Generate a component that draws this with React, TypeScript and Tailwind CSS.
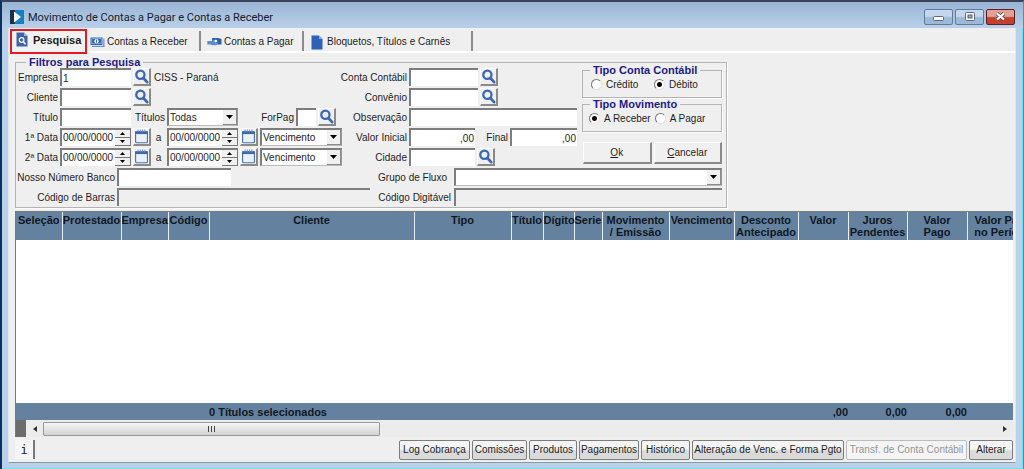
import type { ReactNode } from 'react'
import clsx from 'clsx'

const BEVEL_IN = 'border-t-2 border-l-2 border-[#7d7d7d]'
const FIELD = `h-[18px] min-w-0 bg-white px-px text-[10px] leading-4 text-[#222] outline-none disabled:bg-[#efefef] ${BEVEL_IN}`
const BEVEL_OUT =
  'border-t border-l border-r-2 border-b-2 border-t-white border-l-white border-r-[#8a8a8a] border-b-[#8a8a8a] bg-[#f0f0f0]'

interface Column {
  title: string
  width: number
}

const COLUMNS: Column[] = [
  { title: 'Seleção', width: 46 },
  { title: 'Protestado', width: 59 },
  { title: 'Empresa', width: 47 },
  { title: 'Código', width: 41 },
  { title: 'Cliente', width: 205 },
  { title: 'Tipo', width: 97 },
  { title: 'Título', width: 32 },
  { title: 'Dígito', width: 31 },
  { title: 'Serie', width: 28 },
  { title: 'Movimento\n/ Emissão', width: 67 },
  { title: 'Vencimento', width: 65 },
  { title: 'Desconto\nAntecipado', width: 64 },
  { title: 'Valor', width: 50 },
  { title: 'Juros\nPendentes', width: 59 },
  { title: 'Valor\nPago', width: 60 },
  { title: 'Valor Pago\nno Período', width: 72 },
]

const ACTIONS = [
  { label: 'Log Cobrança', width: 'w-[71px]' },
  { label: 'Comissões', width: 'w-[55px]' },
  { label: 'Produtos', width: 'w-[48px]' },
  { label: 'Pagamentos', width: 'w-[60px]' },
  { label: 'Histórico', width: 'w-[49px]' },
  { label: 'Alteração de Venc. e Forma Pgto', width: 'w-[152px]' },
  { label: 'Transf. de Conta Contábil', width: 'w-[121px]', disabled: true },
  { label: 'Alterar', width: 'w-[44px]' },
]

function SearchIcon() {
  return (
    <svg viewBox="0 0 16 16" className="size-[15px]" fill="none" stroke="#3b68b0">
      <circle cx="6.8" cy="6.2" r="4.4" strokeWidth="2.4" />
      <path d="M10 9.6L14 14" strokeWidth="2.9" strokeLinecap="round" />
    </svg>
  )
}

function CalendarIcon() {
  return (
    <svg viewBox="0 0 16 16" className="size-[15px]">
      <rect x="1.7" y="3" width="12.6" height="11.6" rx="1" fill="#e9f1fb" stroke="#4d72ae" strokeWidth="1.2" />
      <rect x="1.2" y="2.4" width="13.6" height="3" fill="#3f66a8" />
      <path d="M4.4 0.5v3M6.8 0.5v3M9.2 0.5v3M11.6 0.5v3" stroke="#6d8fc6" strokeWidth="1" />
    </svg>
  )
}

function PageSearchIcon() {
  return (
    <svg viewBox="0 0 12 15" className="h-[15px] w-3">
      <path d="M0.5 0.5h7.5l3.5 3.5v10.5h-11z" fill="#3d64a8" />
      <path d="M8 0.5v3.5h3.5z" fill="#9fb7dc" />
      <circle cx="5.6" cy="8" r="2.3" fill="none" stroke="#fff" strokeWidth="1.2" />
      <path d="M7.3 9.8l2.2 2.4" stroke="#fff" strokeWidth="1.4" />
    </svg>
  )
}

function PageIcon() {
  return (
    <svg viewBox="0 0 12 15" className="h-[15px] w-3">
      <path d="M0.5 0.5h7.5l3.5 3.5v10.5h-11z" fill="#2f62b4" />
      <path d="M8 0.5v3.5h3.5z" fill="#8fadd9" />
    </svg>
  )
}

function MoneyIcon() {
  return (
    <svg viewBox="0 0 15 10" className="h-[10px] w-[15px]">
      <rect x="0.5" y="0.5" width="12" height="7.5" fill="#3468b4" />
      <rect x="1.8" y="1.7" width="9.4" height="5" fill="none" stroke="#a9c4ea" strokeWidth="0.6" />
      <circle cx="6.5" cy="4.2" r="2.1" fill="#fff" />
      <path d="M6.5 2.7v3" stroke="#3468b4" strokeWidth="1" />
      <path d="M13.9 1.5v8M2 9.3h12.4" stroke="#4d7cc0" strokeWidth="1" />
    </svg>
  )
}

function PayIcon() {
  return (
    <svg viewBox="0 0 15 10" className="h-[10px] w-[15px]">
      <path d="M5 1h6l3.5 1v5.5h-9z" fill="#2c5fae" />
      <path d="M0.3 4h4.5l2-1.2h3.2l0.6 1.4-2.2 0.8 3 0.5-2 2.8H5l-1.4-0.8H0.3z" fill="#5f8fcb" />
      <circle cx="8.8" cy="4" r="1.3" fill="#fff" />
    </svg>
  )
}

function IconButton({ label, children }: { label: string; children: ReactNode }) {
  return (
    <button
      type="button"
      aria-label={label}
      className={clsx('flex h-[18px] w-[18px] shrink-0 items-center justify-center', BEVEL_OUT)}
    >
      {children}
    </button>
  )
}

function FieldLabel({ id, width, children }: { id: string; width: string; children: ReactNode }) {
  return (
    <label htmlFor={id} className={clsx('flex shrink-0 justify-end pt-[2px] pr-[2px] whitespace-nowrap', width)}>
      {children}
    </label>
  )
}

function SelectBox({ id, label, options, width }: { id: string; label?: string; options: string[]; width: string }) {
  return (
    <div className={clsx('relative shrink-0', width)}>
      <select
        id={id}
        aria-label={label}
        className={clsx('block w-full appearance-none border-r border-b border-r-[#999] border-b-[#bbb]', FIELD)}
      >
        {options.map((o) => (
          <option key={o}>{o}</option>
        ))}
      </select>
      <span className="pointer-events-none absolute top-[2px] right-px flex h-[15px] w-[14px] items-center justify-center border-r border-b border-[#8a8a8a] bg-[#f0f0f0]">
        <svg viewBox="0 0 7 4" className="h-1 w-[7px]">
          <path d="M0 0h7L3.5 4z" fill="#000" />
        </svg>
      </span>
    </div>
  )
}

function DateField({ id, label }: { id: string; label: string }) {
  return (
    <div className="flex w-[90px] shrink-0 gap-[2px]">
      <div className={clsx('flex h-[18px] w-[71px] shrink-0 bg-white', BEVEL_IN)}>
        <input
          id={id}
          aria-label={label}
          defaultValue="00/00/0000"
          className="w-[53px] bg-transparent pl-px text-[10px] leading-4 outline-none"
        />
        <div className="flex w-4 flex-col">
          <button type="button" aria-label="Aumentar" className="flex h-2 items-center justify-center border-r border-b border-[#777] bg-[#f0f0f0]">
            <svg viewBox="0 0 5 3" className="h-[3px] w-[5px]">
              <path d="M0 3h5L2.5 0z" fill="#000" />
            </svg>
          </button>
          <button type="button" aria-label="Diminuir" className="flex h-2 items-center justify-center border-r border-b border-[#777] bg-[#f0f0f0]">
            <svg viewBox="0 0 5 3" className="h-[3px] w-[5px]">
              <path d="M0 0h5L2.5 3z" fill="#000" />
            </svg>
          </button>
        </div>
      </div>
      <IconButton label="Calendário">
        <CalendarIcon />
      </IconButton>
    </div>
  )
}

function DateRow({ id, label }: { id: string; label: string }) {
  return (
    <div className="flex h-[18px] items-center">
      <FieldLabel id={`${id}-de`} width="w-[44px]">{label}</FieldLabel>
      <DateField id={`${id}-de`} label={label} />
      <span className="w-[17px] pt-[2px] text-center">a</span>
      <DateField id={`${id}-ate`} label={`${label} final`} />
      <div className="ml-[3px]">
        <SelectBox id={`${id}-tipo`} label={`Tipo ${label}`} options={['Vencimento', 'Emissão']} width="w-[82px]" />
      </div>
    </div>
  )
}

function Radio({ name, label, checked }: { name: string; label: string; checked?: boolean }) {
  return (
    <label className="flex items-center gap-1">
      <input
        type="radio"
        name={name}
        defaultChecked={checked}
        className="size-[11px] appearance-none rounded-full border border-[#e2e2e2] border-t-[#777] border-l-[#777] bg-white checked:bg-[radial-gradient(circle,#000_2px,#fff_3px)]"
      />
      <span className="pt-[2px]">{label}</span>
    </label>
  )
}

function RadioGroup({ title, children }: { title: string; children: ReactNode }) {
  return (
    <fieldset className="h-[34px] border border-[#b4b4b4] shadow-[1px_1px_0_#fff]">
      <legend className="ml-[7px] px-[3px] text-[11px] leading-3 font-bold text-[#1c1c86]">{title}</legend>
      <div className="flex h-4 items-center pl-[6px]">{children}</div>
    </fieldset>
  )
}

function TitleBar() {
  const frame = 'flex h-4 w-[29px] items-center justify-center rounded-[2px] border'
  return (
    <header className="flex h-[26px] shrink-0 items-center bg-linear-to-b from-[#98b4d3] to-[#bad0ea] pr-2 pl-2">
      <svg viewBox="0 0 14 14" className="mt-1 size-[14px]">
        <rect width="14" height="14" fill="#17324f" />
        <rect x="5" width="9" height="14" fill="#1581c4" />
        <path d="M4 1.5L11 7l-7 5.5z" fill="#fff" />
      </svg>
      <h1 className="ml-1 flex-1 pt-[5px] font-[Roboto,'Open_Sans',sans-serif] text-[11px] leading-4 text-[#14202e]">
        Movimento de Contas a Pagar e Contas a Receber
      </h1>
      <div className="flex gap-[2px] pt-[3px]">
        <button type="button" aria-label="Minimizar" className={clsx(frame, 'border-[#5f7b9c] bg-linear-to-b from-[#c3d6ec] from-45% to-[#9db9d8] to-55%')}>
          <svg viewBox="0 0 11 5" className="mt-[3px] h-[5px] w-[11px]">
            <rect x="0.5" y="0.5" width="10" height="4" rx="1" fill="#fff" stroke="#5b6573" />
          </svg>
        </button>
        <button type="button" aria-label="Maximizar" className={clsx(frame, 'border-[#5f7b9c] bg-linear-to-b from-[#c3d6ec] from-45% to-[#9db9d8] to-55%')}>
          <svg viewBox="0 0 10 9" className="h-[9px] w-[10px]">
            <rect x="0.5" y="0.5" width="9" height="8" rx="1" fill="#fff" stroke="#5b6573" />
            <rect x="3" y="3" width="4" height="3" fill="#8fa9c8" stroke="#5b6573" />
          </svg>
        </button>
        <button type="button" aria-label="Fechar" className={clsx(frame, 'border-[#5a2026] bg-linear-to-b from-[#e3a096] from-45% to-[#c4402d] to-55%')}>
          <svg viewBox="0 0 11 9" className="h-[9px] w-[11px]">
            <path d="M2 1.5l7 6M9 1.5l-7 6" stroke="#6b4a50" strokeWidth="3.8" />
            <path d="M2 1.5l7 6M9 1.5l-7 6" stroke="#fff" strokeWidth="2.2" />
          </svg>
        </button>
      </div>
    </header>
  )
}

function Tabs() {
  const tab = 'flex h-5 items-center border-r-2 border-[#8c8c8c] pt-[2px]'
  return (
    <nav role="tablist" className="flex h-[25px] shrink-0 items-end border-b-2 border-white">
      <button
        type="button"
        role="tab"
        aria-selected="true"
        className="z-10 -mb-[3px] ml-px flex h-[25px] w-[77px] shrink-0 items-center gap-[5px] border-2 border-[#e01b24] bg-[#f2f2f2] pb-1 pl-1 text-[11px] font-bold"
      >
        <PageSearchIcon />
        Pesquisa
      </button>
      <button type="button" role="tab" className={clsx(tab, 'ml-[3px] w-[111px] gap-[2px]')}>
        <MoneyIcon />
        Contas a Receber
      </button>
      <button type="button" role="tab" className={clsx(tab, 'w-[103px] gap-[2px] pl-[6px]')}>
        <PayIcon />
        Contas a Pagar
      </button>
      <button type="button" role="tab" className={clsx(tab, 'w-[169px] gap-1 pl-[7px]')}>
        <PageIcon />
        Bloquetos, Títulos e Carnês
      </button>
    </nav>
  )
}

function Filters() {
  return (
    <fieldset className="w-[712px] border border-[#b4b4b4] pb-px shadow-[1px_1px_0_#fff]">
      <legend className="ml-[10px] px-[3px] text-[11px] leading-3 font-bold text-[#1c1c86]">Filtros para Pesquisa</legend>
      <div className="flex">
        <div className="flex w-[328px] flex-col gap-[2px]">
          <div className="flex h-[18px] items-center">
            <FieldLabel id="empresa" width="w-[44px]">Empresa</FieldLabel>
            <input id="empresa" defaultValue="1" className={clsx(FIELD, 'mr-[2px] w-[71px]')} />
            <IconButton label="Buscar empresa"><SearchIcon /></IconButton>
            <span className="pt-[2px] pl-[3px]">CISS - Paraná</span>
          </div>
          <div className="flex h-[18px] items-center">
            <FieldLabel id="cliente" width="w-[44px]">Cliente</FieldLabel>
            <input id="cliente" className={clsx(FIELD, 'mr-[2px] w-[71px]')} />
            <IconButton label="Buscar cliente"><SearchIcon /></IconButton>
          </div>
          <div className="flex h-[18px] items-center">
            <FieldLabel id="titulo" width="w-[44px]">Título</FieldLabel>
            <input id="titulo" className={clsx(FIELD, 'w-[71px]')} />
            <FieldLabel id="titulos" width="w-[36px]">Títulos</FieldLabel>
            <SelectBox id="titulos" options={['Todas', 'Abertas']} width="w-[71px]" />
            <FieldLabel id="forpag" width="w-[58px]">ForPag</FieldLabel>
            <input id="forpag" className={clsx(FIELD, 'mr-[2px] w-[20px]')} />
            <IconButton label="Buscar forma de pagamento"><SearchIcon /></IconButton>
          </div>
          <DateRow id="data1" label="1ª Data" />
          <DateRow id="data2" label="2ª Data" />
        </div>

        <div className="flex w-[233px] flex-col gap-[2px]">
          <div className="flex h-[18px] items-center">
            <FieldLabel id="conta" width="w-[65px]">Conta Contábil</FieldLabel>
            <input id="conta" className={clsx(FIELD, 'mr-[2px] w-[69px]')} />
            <IconButton label="Buscar conta"><SearchIcon /></IconButton>
          </div>
          <div className="flex h-[18px] items-center">
            <FieldLabel id="convenio" width="w-[65px]">Convênio</FieldLabel>
            <input id="convenio" className={clsx(FIELD, 'mr-[2px] w-[69px]')} />
            <IconButton label="Buscar convênio"><SearchIcon /></IconButton>
          </div>
          <div className="flex h-[18px] items-center">
            <FieldLabel id="obs" width="w-[65px]">Observação</FieldLabel>
            <input id="obs" className={clsx(FIELD, 'flex-1')} />
          </div>
          <div className="flex h-[18px] items-center">
            <FieldLabel id="vinicial" width="w-[65px]">Valor Inicial</FieldLabel>
            <input id="vinicial" defaultValue=",00" className={clsx(FIELD, 'w-[66px] text-right')} />
            <FieldLabel id="vfinal" width="w-[35px]">Final</FieldLabel>
            <input id="vfinal" defaultValue=",00" className={clsx(FIELD, 'flex-1 text-right')} />
          </div>
          <div className="flex h-[18px] items-center">
            <FieldLabel id="cidade" width="w-[65px]">Cidade</FieldLabel>
            <input id="cidade" className={clsx(FIELD, 'mr-[2px] w-[66px]')} />
            <IconButton label="Buscar cidade"><SearchIcon /></IconButton>
          </div>
        </div>

        <div className="-mt-1 ml-[5px] flex flex-1 flex-col pr-1">
          <RadioGroup title="Tipo Conta Contábil">
            <div className="w-[65px] shrink-0 pl-[2px]"><Radio name="conta-tipo" label="Crédito" /></div>
            <Radio name="conta-tipo" label="Débito" checked />
          </RadioGroup>
          <RadioGroup title="Tipo Movimento">
            <div className="flex gap-1 whitespace-nowrap">
              <Radio name="movimento" label="A Receber" checked />
              <Radio name="movimento" label="A Pagar" />
            </div>
          </RadioGroup>
          <div className="mt-[10px] ml-px grid grid-cols-2 gap-[2px]">
            <button type="button" className={clsx('h-[22px]', BEVEL_OUT)}><u>O</u>k</button>
            <button type="button" className={clsx('h-[22px]', BEVEL_OUT)}><u>C</u>ancelar</button>
          </div>
        </div>
      </div>

      <div className="mt-[2px] grid grid-cols-[101px_253px_84px_1fr] items-center gap-y-[2px] pr-1">
        <FieldLabel id="nosso" width="w-full">Nosso Número Banco</FieldLabel>
        <input id="nosso" className={clsx(FIELD, 'w-[114px]')} />
        <FieldLabel id="fluxo" width="w-[79px]">Grupo de Fluxo</FieldLabel>
        <SelectBox id="fluxo" options={['']} width="w-full" />
        <FieldLabel id="barras" width="w-full">Código de Barras</FieldLabel>
        <input id="barras" disabled className={clsx(FIELD, 'w-full')} />
        <FieldLabel id="digitavel" width="w-[83px]">Código Digitável</FieldLabel>
        <input id="digitavel" disabled className={clsx(FIELD, 'w-full')} />
      </div>
    </fieldset>
  )
}

function ResultsTable() {
  return (
    <section className="mt-[3px] flex flex-1 flex-col overflow-hidden border-t border-l border-[#7a7a7a] bg-white">
      <div className="flex-1 overflow-hidden">
        <table className="w-[1023px] table-fixed border-collapse text-[11px] leading-3 font-bold text-[#10181f]">
          <colgroup>
            {COLUMNS.map((c) => (
              <col key={c.title} style={{ width: c.width }} />
            ))}
          </colgroup>
          <thead>
            <tr className="h-[28px] bg-[#6581a0]">
              {COLUMNS.map((c) => (
                <th key={c.title} className="border-r border-[#e6edf3] p-0 pt-[2px] text-center align-top whitespace-pre">
                  {c.title}
                </th>
              ))}
            </tr>
          </thead>
          <tbody>
            <tr className="h-[163px]">
              <td colSpan={16} />
            </tr>
          </tbody>
          <tfoot>
            <tr className="h-[17px] bg-[#6581a0]">
              <td colSpan={4} />
              <td colSpan={8} className="p-0">0 Títulos selecionados</td>
              <td className="p-0 text-right">,00</td>
              <td className="p-0 text-right">0,00</td>
              <td className="p-0 text-right">0,00</td>
              <td />
            </tr>
          </tfoot>
        </table>
      </div>
      <div className="flex h-[17px] shrink-0 items-center bg-[#ececec]">
        <div className="h-full w-[10px] bg-[#6c6c6c]" />
        <button type="button" aria-label="Rolar para a esquerda" className="flex h-full w-[17px] items-center justify-center">
          <svg viewBox="0 0 4 6" className="h-[6px] w-1"><path d="M4 0v6L0 3z" fill="#333" /></svg>
        </button>
        <div className="flex h-[14px] w-[337px] items-center justify-center rounded-[1px] border border-[#999] bg-linear-to-b from-[#f5f5f5] to-[#d2d2d2]">
          <svg viewBox="0 0 8 6" className="h-[6px] w-2">
            <path d="M0.5 0v6M3.5 0v6M6.5 0v6" stroke="#444" />
          </svg>
        </div>
        <button type="button" aria-label="Rolar para a direita" className="ml-auto flex h-full w-[17px] items-center justify-center">
          <svg viewBox="0 0 4 6" className="h-[6px] w-1"><path d="M0 0v6l4-3z" fill="#333" /></svg>
        </button>
      </div>
    </section>
  )
}

function ActionBar() {
  return (
    <footer className="flex h-[25px] shrink-0 items-center gap-[2px]">
      <button type="button" aria-label="Informações" className="mr-auto h-[19px] w-5 border-r-2 border-[#777] bg-[#f6f6f6] font-['DejaVu_Sans_Mono',monospace] text-[12px]">
        i
      </button>
      {ACTIONS.map((a) => (
        <button
          key={a.label}
          type="button"
          disabled={a.disabled}
          className={clsx(
            'h-5 shrink-0 rounded-[2px] border whitespace-nowrap',
            a.width,
            a.disabled
              ? 'border-[#bdbdbd] bg-[#f4f4f4] text-[#959595]'
              : 'border-[#7c7c7c] bg-linear-to-b from-[#f4f4f4] from-45% to-[#dadada] to-55%'
          )}
        >
          {a.label}
        </button>
      ))}
    </footer>
  )
}

export default function App() {
  return (
    <div className="flex min-h-screen flex-col border-t-2 border-r border-b border-l-2 border-t-[#3c4358] border-r-[#2a9fc4] border-b-[#0b1620] border-l-[#0c2f63] bg-[#b9d0e9] font-['Liberation_Sans',Arial,sans-serif] text-[10px] leading-3 text-[#1e1e1e]">
      <TitleBar />
      <div className="flex flex-1 flex-col border-r border-b border-[#6fdcf2] pr-[6px] pb-[5px] pl-[6px]">
        <main className="flex flex-1 flex-col overflow-hidden border border-t-0 border-[#dfe6ee] border-b-[#8f9aa6] bg-[#efefef]">
          <Tabs />
          <div className="flex flex-1 flex-col overflow-hidden pt-[3px] pr-[2px] pl-[6px]">
            <Filters />
            <ResultsTable />
            <ActionBar />
          </div>
        </main>
      </div>
    </div>
  )
}
